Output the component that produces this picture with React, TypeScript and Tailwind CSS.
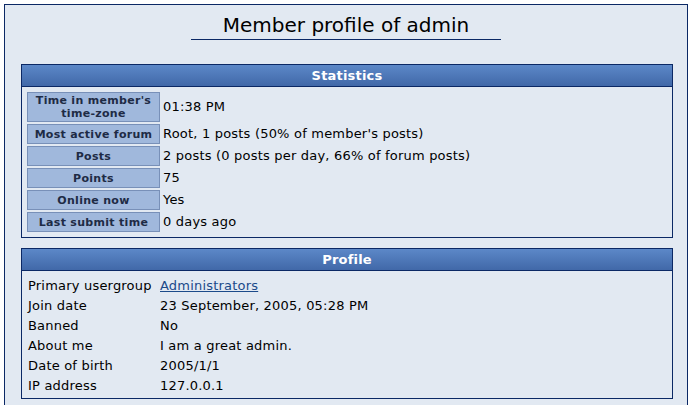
const statRows: { label: string[]; value: string }[] = [
  { label: ["Time in member's", 'time-zone'], value: '01:38 PM' },
  { label: ['Most active forum'], value: "Root, 1 posts (50% of member's posts)" },
  { label: ['Posts'], value: '2 posts (0 posts per day, 66% of forum posts)' },
  { label: ['Points'], value: '75' },
  { label: ['Online now'], value: 'Yes' },
  { label: ['Last submit time'], value: '0 days ago' },
]

const profileRows: { label: string; value: string; link?: boolean }[] = [
  { label: 'Primary usergroup', value: 'Administrators', link: true },
  { label: 'Join date', value: '23 September, 2005, 05:28 PM' },
  { label: 'Banned', value: 'No' },
  { label: 'About me', value: 'I am a great admin.' },
  { label: 'Date of birth', value: '2005/1/1' },
  { label: 'IP address', value: '127.0.0.1' },
]

function PanelHeader({ title }: { title: string }) {
  return (
    <div className="h-[22px] border-b border-[#0b2865] bg-gradient-to-b from-[#5c88c8] to-[#4168a8] text-center text-[13px] font-bold leading-[21px] text-white">
      {title}
    </div>
  )
}

export default function App() {
  return (
    <div className="h-[405px] overflow-hidden bg-white pl-[4px] pt-[4px] font-['DejaVu_Sans',sans-serif] text-[13px] tracking-[0.2px] text-black">
      <div className="h-[410px] w-[684px] border border-[#0b2865] bg-[#e2e9f2]">
        <div className="flex justify-center pt-[9px]">
          <h1 className="w-[310px] border-b border-[#0b2865] pb-[3px] text-center text-[20px] leading-[22px] tracking-normal">
            Member profile of admin
          </h1>
        </div>

        <div className="ml-[16px] mt-[24px] w-[652px] border border-[#0b2865]">
          <PanelHeader title="Statistics" />
          <div className="flex flex-col gap-[2px] px-[5px] pb-[5px] pt-[5px]">
            {statRows.map((r) => (
              <div key={r.value} className="flex items-center">
                <div
                  className={`flex w-[133px] shrink-0 flex-col items-center justify-center border border-[#7890b8] bg-[#a0b8dc] text-[11px] font-bold leading-[13px] tracking-[0.3px] text-[#1e2b45] ${
                    r.label.length > 1 ? 'h-[30px]' : 'h-[20px]'
                  }`}
                >
                  {r.label.map((l) => (
                    <span key={l}>{l}</span>
                  ))}
                </div>
                <div className="pl-[3px] leading-[16px]">{r.value}</div>
              </div>
            ))}
          </div>
        </div>

        <div className="ml-[16px] mt-[10px] w-[652px] border border-[#0b2865]">
          <PanelHeader title="Profile" />
          <div className="flex flex-col px-[6px] pb-[2px] pt-[5px]">
            {profileRows.map((r) => (
              <div key={r.label} className="flex h-[20px] items-center">
                <div className="w-[132px] shrink-0">{r.label}</div>
                <div>
                  {r.link ? (
                    <a href="#" className="text-[#1b4a8a] underline">
                      {r.value}
                    </a>
                  ) : (
                    r.value
                  )}
                </div>
              </div>
            ))}
          </div>
        </div>
      </div>
    </div>
  )
}
